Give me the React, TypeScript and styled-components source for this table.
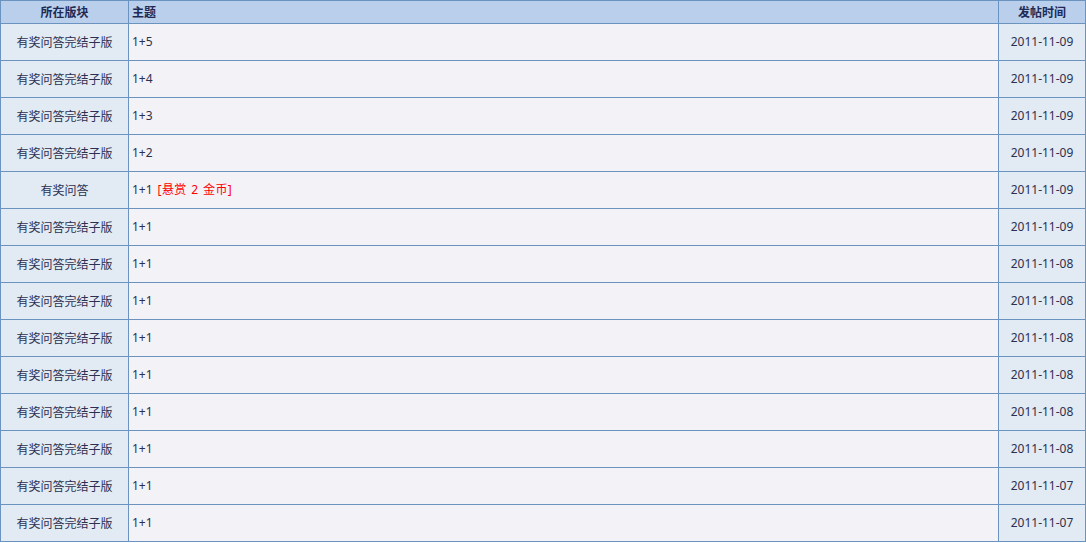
import React from "react";
import styled, { createGlobalStyle } from "styled-components";

const Global = createGlobalStyle`
  html, body { margin: 0; padding: 0; background: #ffffff; }
  body { font-family: "Noto Sans", "Noto Sans CJK SC", sans-serif; font-size: 12px; }
`;

const Grid = styled.div`
  display: grid;
  grid-template-columns: 127px 869px 86px;
  grid-auto-rows: 36px;
  grid-template-rows: 22px;
  gap: 1px;
  padding: 1px;
  width: 1084px;
  background: #6b93c0;
`;

const HeadCell = styled.div<{ $align?: "left" | "center" }>`
  background: #b9cfec;
  color: #1e2a55;
  font-weight: bold;
  font-family: "Noto Sans CJK SC", sans-serif;
  font-size: 12px;
  display: flex;
  align-items: center;
  justify-content: ${(p) => (p.$align === "left" ? "flex-start" : "center")};
  padding-left: ${(p) => (p.$align === "left" ? "3px" : "0")};
  padding-bottom: 1px;
`;

const Cell = styled.div<{ $side?: boolean; $align?: "left" | "center" }>`
  background: ${(p) => (p.$side ? "#e2eaf3" : "#f2f2f7")};
  color: #2c3050;
  font-family: "Noto Sans", "Noto Sans CJK SC", sans-serif;
  font-size: 12px;
  display: flex;
  align-items: center;
  justify-content: ${(p) => (p.$align === "left" ? "flex-start" : "center")};
  padding-left: ${(p) => (p.$align === "left" ? "3px" : "0")};
  padding-bottom: 2px;
  white-space: nowrap;
`;

const Forum = styled.span`
  font-family: "Noto Sans CJK SC", sans-serif;
`;

const Reward = styled.span`
  color: #ff0000;
  margin-left: 5px;
  letter-spacing: 0.4px;
  word-spacing: 1px;
  font-family: "Noto Sans", "Noto Sans CJK SC", sans-serif;
`;

type Row = { forum: string; title: string; date: string; reward?: number };

const rows: Row[] = [
  { forum: "有奖问答完结子版", title: "1+5", date: "2011-11-09" },
  { forum: "有奖问答完结子版", title: "1+4", date: "2011-11-09" },
  { forum: "有奖问答完结子版", title: "1+3", date: "2011-11-09" },
  { forum: "有奖问答完结子版", title: "1+2", date: "2011-11-09" },
  { forum: "有奖问答", title: "1+1", date: "2011-11-09", reward: 2 },
  { forum: "有奖问答完结子版", title: "1+1", date: "2011-11-09" },
  { forum: "有奖问答完结子版", title: "1+1", date: "2011-11-08" },
  { forum: "有奖问答完结子版", title: "1+1", date: "2011-11-08" },
  { forum: "有奖问答完结子版", title: "1+1", date: "2011-11-08" },
  { forum: "有奖问答完结子版", title: "1+1", date: "2011-11-08" },
  { forum: "有奖问答完结子版", title: "1+1", date: "2011-11-08" },
  { forum: "有奖问答完结子版", title: "1+1", date: "2011-11-08" },
  { forum: "有奖问答完结子版", title: "1+1", date: "2011-11-07" },
  { forum: "有奖问答完结子版", title: "1+1", date: "2011-11-07" },
];

export default function App() {
  return (
    <>
      <Global />
      <Grid>
        <HeadCell>所在版块</HeadCell>
        <HeadCell $align="left">主题</HeadCell>
        <HeadCell>发帖时间</HeadCell>
        {rows.map((r, i) => (
          <React.Fragment key={i}>
            <Cell $side>
              <Forum>{r.forum}</Forum>
            </Cell>
            <Cell $align="left">
              {r.title}
              {r.reward !== undefined && <Reward>[悬赏 {r.reward} 金币]</Reward>}
            </Cell>
            <Cell $side>{r.date}</Cell>
          </React.Fragment>
        ))}
      </Grid>
    </>
  );
}
